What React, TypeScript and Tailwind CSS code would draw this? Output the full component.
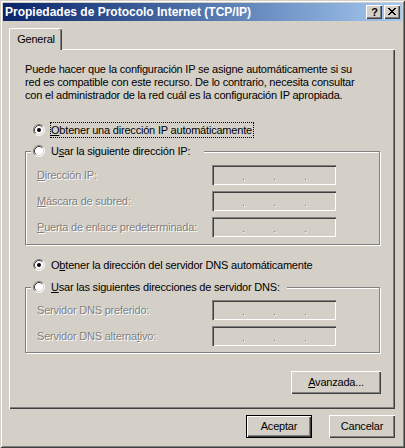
import React from "react";

const F = "font-['Liberation_Sans',Arial,sans-serif]";

function Radio({ checked }: { checked?: boolean }) {
  return (
    <svg width="12" height="12" viewBox="0 0 12 12" className="shrink-0">
      <circle cx="6" cy="6" r="5" fill="#fff" />
      <path d="M2.11 9.89 A5.5 5.5 0 0 1 9.89 2.11" fill="none" stroke="#808080" strokeWidth="1" />
      <path d="M9.89 2.11 A5.5 5.5 0 0 1 2.11 9.89" fill="none" stroke="#ffffff" strokeWidth="1" />
      <path d="M2.82 9.18 A4.5 4.5 0 0 1 9.18 2.82" fill="none" stroke="#404040" strokeWidth="1" />
      <path d="M9.18 2.82 A4.5 4.5 0 0 1 2.82 9.18" fill="none" stroke="#d4d0c8" strokeWidth="1" />
      {checked && <circle cx="6" cy="6" r="2" fill="#000" />}
    </svg>
  );
}

function IpBox() {
  return (
    <div className="w-[124px] h-[20px] bg-[#d4d0c8] shadow-[inset_1px_1px_0_#808080,inset_2px_2px_0_#404040,inset_-1px_-1px_0_#ffffff,inset_-2px_-2px_0_#d4d0c8] flex items-start pt-[14px] pl-[31px] gap-[30px]">
      <span className="w-[1px] h-[1px] bg-[#808080] shadow-[1px_1px_0_#fff]" />
      <span className="w-[1px] h-[1px] bg-[#808080] shadow-[1px_1px_0_#fff]" />
      <span className="w-[1px] h-[1px] bg-[#808080] shadow-[1px_1px_0_#fff]" />
    </div>
  );
}

function FieldRow({ label }: { label: React.ReactNode }) {
  return (
    <div className="flex items-center h-[20px]">
      <div className="w-[175px] text-[#808080] [text-shadow:1px_1px_0_#fff] whitespace-nowrap">{label}</div>
      <IpBox />
    </div>
  );
}

function Btn({ children, w, def }: { children: React.ReactNode; w: string; def?: boolean }) {
  if (def) {
    return (
      <div className={`${w} h-[23px] border border-black flex`}>
        <div className="flex-1 flex items-center justify-center shadow-[inset_1px_1px_0_#fff,inset_-1px_-1px_0_#404040,inset_-2px_-2px_0_#808080]">
          {children}
        </div>
      </div>
    );
  }
  return (
    <div className={`${w} h-[23px] flex items-center justify-center shadow-[inset_1px_1px_0_#fff,inset_-1px_-1px_0_#404040,inset_-2px_-2px_0_#808080]`}>
      {children}
    </div>
  );
}

export default function App() {
  return (
    <div className={`${F} text-[11px] tracking-[-0.2px] leading-[13px] text-black w-[405px] h-[448px] bg-[#d4d0c8] p-[3px] flex flex-col shadow-[inset_1px_1px_0_#d4d0c8,inset_-1px_-1px_0_#404040,inset_2px_2px_0_#ffffff,inset_-2px_-2px_0_#808080]`}>
      {/* Title bar */}
      <div className="h-[18px] shrink-0 bg-gradient-to-r from-[#0a246a] to-[#a6caf0] flex items-center pl-[2px] pr-[2px]">
        <div className="flex-1 text-white font-bold text-[12px] tracking-[0px] whitespace-nowrap">
          Propiedades de Protocolo Internet (TCP/IP)
        </div>
        <div className="flex gap-[2px]">
          <div className="w-[16px] h-[14px] bg-[#d4d0c8] shadow-[inset_1px_1px_0_#fff,inset_-1px_-1px_0_#404040,inset_-2px_-2px_0_#808080] flex items-center justify-center">
            <span className="font-bold text-[11px] leading-[11px] text-black pl-[1px]">?</span>
          </div>
          <div className="w-[16px] h-[14px] bg-[#d4d0c8] shadow-[inset_1px_1px_0_#fff,inset_-1px_-1px_0_#404040,inset_-2px_-2px_0_#808080] flex items-start pt-[3px] pl-[4px]">
            <svg width="8" height="7" viewBox="0 0 8 7" shapeRendering="crispEdges">
              <path
                fill="#000"
                d="M0 0h2v1h-2zM6 0h2v1h-2zM1 1h2v1h-2zM5 1h2v1h-2zM2 2h4v1h-4zM3 3h2v1h-2zM2 4h4v1h-4zM1 5h2v1h-2zM5 5h2v1h-2zM0 6h2v1h-2zM6 6h2v1h-2z"
              />
            </svg>
          </div>
        </div>
      </div>

      {/* Tabs + panel */}
      <div className="pl-[6px] pr-[7px] pt-[7px] flex flex-col">
        <div className="relative z-10 -mb-[1px] w-[53px] h-[22px] bg-[#d4d0c8] border-l border-t border-white rounded-tl-[2px] rounded-tr-[2px] shadow-[inset_-1px_0_0_#404040,inset_-2px_0_0_#808080] flex items-start justify-center pt-[4px]">
          General
        </div>
        <div className="w-[386px] h-[360px] shadow-[inset_1px_1px_0_#ffffff,inset_-1px_-1px_0_#404040,inset_-2px_-2px_0_#808080] pl-[16px] pr-[14px] pt-[14px] flex flex-col">
          <p className="whitespace-nowrap">
            Puede hacer que la configuración IP se asigne automáticamente si su
            <br />
            red es compatible con este recurso. De lo contrario, necesita consultar
            <br />
            con el administrador de la red cuál es la configuración IP apropiada.
          </p>

          {/* Radio 1 */}
          <div className="mt-[20px] h-[16px] flex items-center pl-[8px] gap-[5px]">
            <Radio checked />
            <span className="border border-dotted border-black h-[16px] leading-[14px] pr-[1px]">
              <u>O</u>btener una dirección IP automáticamente
            </span>
          </div>

          {/* Group 1 */}
          <div className="relative z-10 mt-[5px] ml-[6px] self-start h-[16px] bg-[#d4d0c8] flex items-center pl-[2px] pr-[13px] gap-[5px]">
            <Radio />
            <span className="border border-transparent leading-[14px]">
              U<u>s</u>ar la siguiente dirección IP:
            </span>
          </div>
          <div className="-mt-[8px] w-[355px] border border-[#808080] shadow-[inset_1px_1px_0_#fff,1px_1px_0_#fff] pt-[13px] pb-[7px] pl-[11px] flex flex-col gap-[6px]">
            <FieldRow label={<><u>D</u>irección IP:</>} />
            <FieldRow label={<><u>M</u>áscara de subred:</>} />
            <FieldRow label={<><u>P</u>uerta de enlace predeterminada:</>} />
          </div>

          {/* Radio 3 */}
          <div className="mt-[12px] h-[16px] flex items-center pl-[8px] gap-[5px]">
            <Radio checked />
            <span className="border border-transparent leading-[14px]">
              O<u>b</u>tener la dirección del servidor DNS automáticamente
            </span>
          </div>

          {/* Group 2 */}
          <div className="relative z-10 mt-[6px] ml-[6px] self-start h-[16px] bg-[#d4d0c8] flex items-center pl-[2px] pr-[6px] gap-[5px]">
            <Radio />
            <span className="border border-transparent leading-[14px]">
              <u>U</u>sar las siguientes direcciones de servidor DNS:
            </span>
          </div>
          <div className="-mt-[8px] w-[355px] border border-[#808080] shadow-[inset_1px_1px_0_#fff,1px_1px_0_#fff] pt-[12px] pb-[6px] pl-[11px] flex flex-col gap-[6px]">
            <FieldRow label={<>Servidor DNS preferido:</>} />
            <FieldRow label={<>Servidor DNS alterna<u>t</u>ivo:</>} />
          </div>

          <div className="mt-[18px] self-end">
            <Btn w="w-[90px]">
              <span>
                <u>A</u>vanzada...
              </span>
            </Btn>
          </div>
        </div>
      </div>

      {/* Bottom buttons */}
      <div className="mt-[6px] pr-[7px] flex justify-end gap-[17px]">
        <Btn w="w-[66px]" def>
          Aceptar
        </Btn>
        <Btn w="w-[66px]">Cancelar</Btn>
      </div>
    </div>
  );
}
